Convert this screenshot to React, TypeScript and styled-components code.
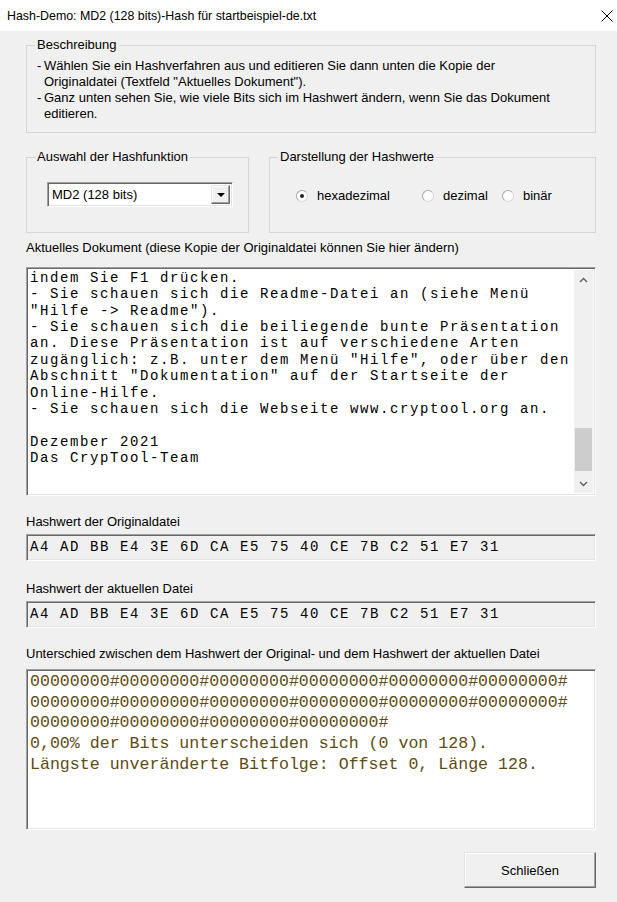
import React from "react"
import styled, { createGlobalStyle } from "styled-components"

const GlobalStyle = createGlobalStyle`
  html, body {
    margin: 0;
    padding: 0;
    background: #f0f0f0;
  }
`

const Window = styled.div`
  width: 617px;
  height: 902px;
  background: #f0f0f0;
  display: flex;
  flex-direction: column;
  overflow: hidden;
  font-family: "Liberation Sans", Arial, sans-serif;
  font-size: 13px;
  color: #000;
`

const TitleBar = styled.div`
  height: 31px;
  flex-shrink: 0;
  background: #fff;
  display: flex;
  align-items: center;
  justify-content: space-between;
  padding: 0 3px 0 7px;
  font-size: 12.4px;
`

const Body = styled.div`
  display: flex;
  flex-direction: column;
  padding: 6px 21px 0 26px;
`

const GroupBox = styled.fieldset<{ $height?: number }>`
  margin: 0;
  min-width: 0;
  border: 1px solid #d5d5d5;
  padding: 0 10px 9px 10px;
  ${({ $height }) => ($height ? `height: ${$height}px;` : "")}
  box-sizing: border-box;
`

const Legend = styled.legend`
  padding: 0 2px;
  margin-left: -2px;
  line-height: 16px;
`

const DescList = styled.ul`
  list-style: none;
  margin: 5px 0 0 0;
  padding: 0;
`

const DescItem = styled.li`
  display: flex;
  line-height: 16px;
`

const Dash = styled.span`
  width: 7px;
  flex-shrink: 0;
`

const Row = styled.div`
  display: flex;
  gap: 20px;
  margin-top: 16px;
`

const Combo = styled.div`
  width: 186px;
  height: 25px;
  box-sizing: border-box;
  margin: 17px 0 0 10px;
  display: flex;
  align-items: center;
  background: #fff;
  border: 1px solid;
  border-color: #a0a0a0 #fff #fff #a0a0a0;
  box-shadow: inset 1px 1px 0 #696969, inset -1px -1px 0 #e3e3e3;
  padding: 2px 2px 2px 4px;
`

const ComboText = styled.span`
  flex: 1;
`

const ComboArrow = styled.div`
  width: 19px;
  height: 19px;
  box-sizing: border-box;
  display: flex;
  align-items: center;
  justify-content: center;
  background: #f0f0f0;
  border: 1px solid;
  border-color: #e3e3e3 #696969 #696969 #e3e3e3;
  box-shadow: inset -1px -1px 0 #a0a0a0, inset 1px 1px 0 #fff;
`

const Triangle = styled.span`
  width: 0;
  height: 0;
  border-left: 4px solid transparent;
  border-right: 4px solid transparent;
  border-top: 4px solid #000;
`

const RadioRow = styled.div`
  display: flex;
  margin: 23px 0 0 16px;
`

const RadioOption = styled.label<{ $width?: number }>`
  display: flex;
  align-items: center;
  gap: 9px;
  line-height: 16px;
  ${({ $width }) => ($width ? `width: ${$width}px;` : "")}
`

const RadioCircle = styled.span<{ $checked?: boolean }>`
  width: 12px;
  height: 12px;
  box-sizing: border-box;
  border-radius: 50%;
  border: 1px solid;
  border-color: #a8a8a8 #d8d8d8 #d8d8d8 #a8a8a8;
  background: #fff;
  display: flex;
  align-items: center;
  justify-content: center;
  &::after {
    content: "";
    width: 4px;
    height: 4px;
    border-radius: 50%;
    background: ${({ $checked }) => ($checked ? "#222" : "transparent")};
  }
`

const FieldLabel = styled.div<{ $top: number }>`
  margin-top: ${({ $top }) => $top}px;
  line-height: 16px;
`

const Sunken = styled.div<{ $top: number; $height: number; $bg?: string }>`
  margin-top: ${({ $top }) => $top}px;
  height: ${({ $height }) => $height}px;
  flex-shrink: 0;
  box-sizing: border-box;
  background: ${({ $bg }) => $bg || "#fff"};
  border: 1px solid;
  border-color: #a0a0a0 #fff #fff #a0a0a0;
  box-shadow: inset 1px 1px 0 #696969, inset -1px -1px 0 #e3e3e3;
  padding: 2px 2px 2px 2px;
  display: flex;
  overflow: hidden;
`

const DocText = styled.div`
  flex: 1;
  padding-left: 1px;
  font-family: "Liberation Mono", "Courier New", monospace;
  font-size: 14px;
  letter-spacing: 1.6px;
  line-height: 16.36px;
  white-space: pre;
  overflow: hidden;
`

const HashText = styled.div`
  padding: 2px 0 0 1px;
  font-family: "Liberation Mono", "Courier New", monospace;
  font-size: 14px;
  letter-spacing: 1.6px;
  line-height: 16px;
  white-space: pre;
`

const DiffText = styled.div`
  padding-left: 1px;
  font-family: "Liberation Mono", "Courier New", monospace;
  font-size: 16.6px;
  line-height: 20.7px;
  color: #5e4c14;
  white-space: pre;
`

const ScrollBar = styled.div`
  width: 19px;
  flex-shrink: 0;
  background: #f0f0f0;
  display: flex;
  flex-direction: column;
  align-items: center;
`

const ScrollArrow = styled.div`
  height: 19px;
  width: 100%;
  display: flex;
  align-items: center;
  justify-content: center;
`

const ScrollTrack = styled.div`
  flex: 1;
  width: 100%;
  display: flex;
  flex-direction: column;
  justify-content: flex-end;
`

const ScrollThumb = styled.div`
  height: 43px;
  margin: 0 1px 3px 1px;
  background: #cdcdcd;
`

const ButtonRow = styled.div`
  display: flex;
  justify-content: flex-end;
  margin-top: 22px;
`

const DialogButton = styled.button`
  width: 132px;
  height: 36px;
  font-family: "Liberation Sans", Arial, sans-serif;
  font-size: 13px;
  color: #000;
  background: #f0f0f0;
  border: 1px solid;
  border-color: #e3e3e3 #696969 #696969 #e3e3e3;
  box-shadow: inset -1px -1px 0 #a0a0a0, inset 1px 1px 0 #fff;
  padding: 0;
`

const Chevron = ({ up }: { up?: boolean }) => (
  <svg width="9" height="6" viewBox="0 0 9 6">
    <path
      d={up ? "M1 5 L4.5 1.5 L8 5" : "M1 1 L4.5 4.5 L8 1"}
      fill="none"
      stroke="#606060"
      strokeWidth="1.4"
    />
  </svg>
)

const CloseIcon = () => (
  <svg width="14" height="14" viewBox="0 0 14 14">
    <path d="M1.5 1.5 L12.5 12.5 M12.5 1.5 L1.5 12.5" stroke="#000" strokeWidth="1" />
  </svg>
)

const docLines = [
  "indem Sie F1 drücken.",
  "- Sie schauen sich die Readme-Datei an (siehe Menü",
  "\"Hilfe -> Readme\").",
  "- Sie schauen sich die beiliegende bunte Präsentation",
  "an. Diese Präsentation ist auf verschiedene Arten",
  "zugänglich: z.B. unter dem Menü \"Hilfe\", oder über den",
  "Abschnitt \"Dokumentation\" auf der Startseite der",
  "Online-Hilfe.",
  "- Sie schauen sich die Webseite www.cryptool.org an.",
  "",
  "Dezember 2021",
  "Das CrypTool-Team",
]

const hash = "A4 AD BB E4 3E 6D CA E5 75 40 CE 7B C2 51 E7 31"
const zeros = "00000000#"

const diffLines = [
  zeros.repeat(6),
  zeros.repeat(6),
  zeros.repeat(4),
  "0,00% der Bits unterscheiden sich (0 von 128).",
  "Längste unveränderte Bitfolge: Offset 0, Länge 128.",
]

const App = () => {
  return (
    <Window>
      <GlobalStyle />
      <TitleBar>
        <span>Hash-Demo: MD2 (128 bits)-Hash für startbeispiel-de.txt</span>
        <CloseIcon />
      </TitleBar>
      <Body>
        <GroupBox $height={96}>
          <Legend>Beschreibung</Legend>
          <DescList>
            <DescItem>
              <Dash>-</Dash>
              <span>
                Wählen Sie ein Hashverfahren aus und editieren Sie dann unten die Kopie der
                <br />
                Originaldatei (Textfeld "Aktuelles Dokument").
              </span>
            </DescItem>
            <DescItem>
              <Dash>-</Dash>
              <span>
                Ganz unten sehen Sie, wie viele Bits sich im Hashwert ändern, wenn Sie das Dokument
                <br />
                editieren.
              </span>
            </DescItem>
          </DescList>
        </GroupBox>

        <Row>
          <GroupBox $height={84} style={{ width: 223 }}>
            <Legend>Auswahl der Hashfunktion</Legend>
            <Combo>
              <ComboText>MD2 (128 bits)</ComboText>
              <ComboArrow>
                <Triangle />
              </ComboArrow>
            </Combo>
          </GroupBox>
          <GroupBox $height={84} style={{ flex: 1 }}>
            <Legend>Darstellung der Hashwerte</Legend>
            <RadioRow>
              <RadioOption $width={126}>
                <RadioCircle $checked />
                hexadezimal
              </RadioOption>
              <RadioOption $width={80}>
                <RadioCircle />
                dezimal
              </RadioOption>
              <RadioOption>
                <RadioCircle />
                binär
              </RadioOption>
            </RadioRow>
          </GroupBox>
        </Row>

        <FieldLabel $top={7}>
          Aktuelles Dokument (diese Kopie der Originaldatei können Sie hier ändern)
        </FieldLabel>
        <Sunken $top={11} $height={229}>
          <DocText>{docLines.join("\n")}</DocText>
          <ScrollBar>
            <ScrollArrow>
              <Chevron up />
            </ScrollArrow>
            <ScrollTrack>
              <ScrollThumb />
            </ScrollTrack>
            <ScrollArrow>
              <Chevron />
            </ScrollArrow>
          </ScrollBar>
        </Sunken>

        <FieldLabel $top={18}>Hashwert der Originaldatei</FieldLabel>
        <Sunken $top={4} $height={27} $bg="#f0f0f0">
          <HashText>{hash}</HashText>
        </Sunken>

        <FieldLabel $top={20}>Hashwert der aktuellen Datei</FieldLabel>
        <Sunken $top={4} $height={27} $bg="#f0f0f0">
          <HashText>{hash}</HashText>
        </Sunken>

        <FieldLabel $top={18}>
          Unterschied zwischen dem Hashwert der Original- und dem Hashwert der aktuellen Datei
        </FieldLabel>
        <Sunken $top={7} $height={161}>
          <DiffText>{diffLines.join("\n")}</DiffText>
        </Sunken>

        <ButtonRow>
          <DialogButton>Schließen</DialogButton>
        </ButtonRow>
      </Body>
    </Window>
  )
}

export default App
